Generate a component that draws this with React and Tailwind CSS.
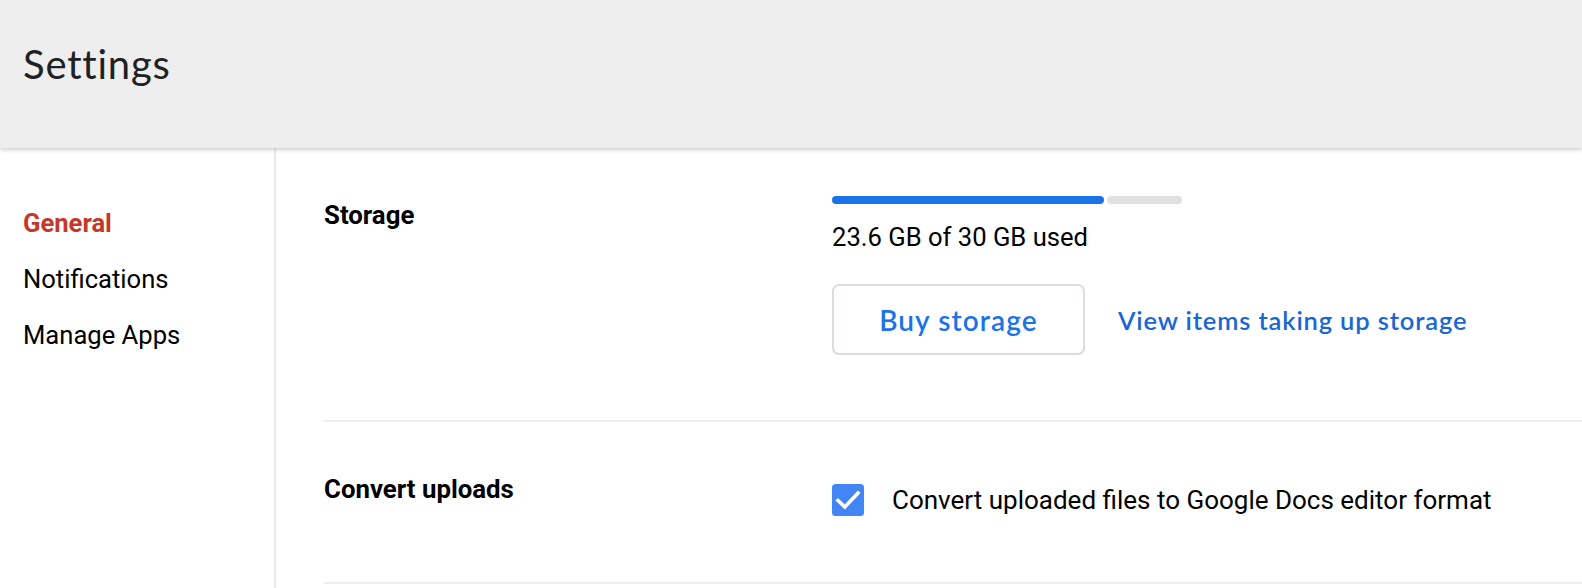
import React from "react";

export default function App() {
  return (
    <div className="w-[1582px] h-[588px] overflow-hidden bg-white flex flex-col font-['Roboto',sans-serif] text-black">
      <header className="relative z-10 h-[148px] shrink-0 bg-[#eeeeee] pl-[23px] pt-[40px] shadow-[0_2px_4px_rgba(0,0,0,0.18)]">
        <h1 className="font-['Lato',sans-serif] text-[40px] leading-[48px] font-normal tracking-[0.8px] text-[#202124]">Settings</h1>
      </header>
      <div className="flex flex-1 min-h-0">
        <nav className="w-[276px] shrink-0 border-r-2 border-[#e8e8e8] pl-[23px] pt-[60px] flex flex-col gap-[26px] text-[25.6px] leading-[30px]">
          <div className="font-bold text-[#c5392a]">General</div>
          <div>Notifications</div>
          <div>Manage Apps</div>
        </nav>
        <main className="flex-1 pl-[48px]">
          <section className="flex border-b-2 border-[#ededed] pt-[48px] pb-[65px]">
            <div className="w-[508px] shrink-0 pt-[4px] text-[25.8px] leading-[30px] font-bold">Storage</div>
            <div className="flex flex-col">
              <div className="flex w-[350px] h-[8px] gap-[3px]">
                <div className="w-[272px] h-full rounded-full bg-[#1a73e8]" />
                <div className="flex-1 h-full rounded-full bg-[#e0e0e0]" />
              </div>
              <div className="mt-[18px] text-[25.6px] leading-[30px]">23.6 GB of 30 GB used</div>
              <div className="mt-[32px] flex items-center gap-[33px]">
                <button className="w-[253px] h-[71px] rounded-[7px] border-2 border-[#dadce0] bg-white font-['Lato',sans-serif] text-[28px] tracking-[1.1px] font-semibold text-[#1a73e8]">
                  Buy storage
                </button>
                <a className="font-['Lato',sans-serif] text-[25.5px] tracking-[0.85px] font-semibold text-[#1967d2] leading-[30px]">
                  View items taking up storage
                </a>
              </div>
            </div>
          </section>
          <section className="flex border-b-2 border-[#ededed] pt-[52px] pb-[66px]">
            <div className="w-[508px] shrink-0 text-[25.8px] leading-[30px] font-bold">Convert uploads</div>
            <div className="mt-[10px] flex items-center gap-[28px]">
              <svg width="32" height="32" viewBox="0 0 32 32" className="shrink-0">
                <rect x="0" y="0" width="32" height="32" rx="3.5" fill="#4285f4" />
                <path d="M6 16.5 L12.8 23 L26 9" fill="none" stroke="#ffffff" strokeWidth="3.6" strokeLinecap="square" />
              </svg>
              <span className="text-[26px] leading-[30px]">Convert uploaded files to Google Docs editor format</span>
            </div>
          </section>
        </main>
      </div>
    </div>
  );
}
